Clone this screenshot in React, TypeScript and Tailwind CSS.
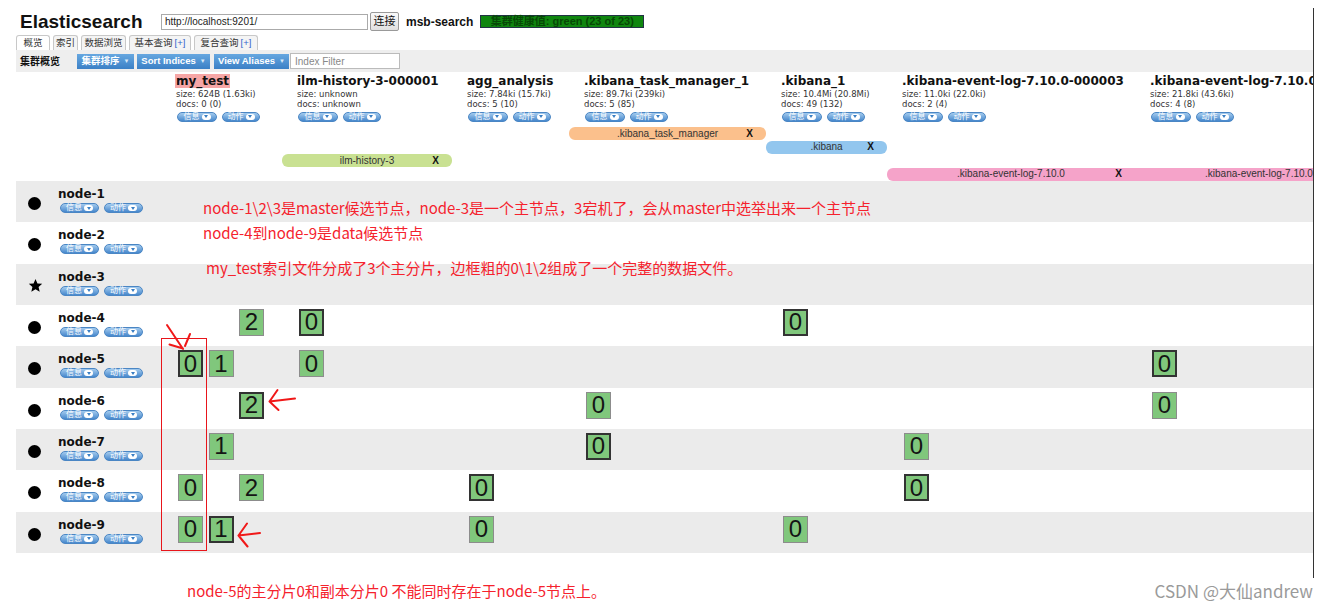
import clsx from "clsx";

type Slot = "p" | "r" | null;

const COLS =
  "grid grid-cols-[159px_121px_170px_117px_197px_121px_248px_164px]";

const indices = [
  { name: "my_test", size: "624B (1.63ki)", docs: "0 (0)", hl: true },
  { name: "ilm-history-3-000001", size: "unknown", docs: "unknown" },
  { name: "agg_analysis", size: "7.84ki (15.7ki)", docs: "5 (10)" },
  { name: ".kibana_task_manager_1", size: "89.7ki (239ki)", docs: "5 (85)" },
  { name: ".kibana_1", size: "10.4Mi (20.8Mi)", docs: "49 (132)" },
  {
    name: ".kibana-event-log-7.10.0-000003",
    size: "11.0ki (22.0ki)",
    docs: "2 (4)",
  },
  { name: ".kibana-event-log-7.10.0", size: "21.8ki (43.6ki)", docs: "4 (8)" },
];

const aliases = [
  {
    name: ".kibana_task_manager",
    col: "col-start-5",
    w: "w-[197px]",
    color: "bg-[#fbc08c]",
  },
  { name: ".kibana", col: "col-start-6", w: "w-[121px]", color: "bg-[#92c6ee]" },
  {
    name: "ilm-history-3",
    col: "col-start-3",
    w: "w-[170px]",
    color: "bg-[#c9e192]",
  },
];

const nodes: { name: string; star?: boolean; shards: Slot[][] }[] = [
  { name: "node-1", shards: [] },
  { name: "node-2", shards: [] },
  { name: "node-3", star: true, shards: [] },
  { name: "node-4", shards: [[null, null, "r"], ["p"], [], [], ["p"], [], []] },
  { name: "node-5", shards: [["p", "r"], ["r"], [], [], [], [], ["p"]] },
  { name: "node-6", shards: [[null, null, "p"], [], [], ["r"], [], [], ["r"]] },
  { name: "node-7", shards: [[null, "r"], [], [], ["p"], [], ["r"], []] },
  { name: "node-8", shards: [["r", null, "r"], [], ["p"], [], [], ["p"], []] },
  { name: "node-9", shards: [["r", "p"], [], ["r"], [], ["r"], [], []] },
];

const MenuButton = ({ label, w }: { label: string; w: string }) => (
  <span
    className={clsx(
      "flex h-[10px] items-center justify-center gap-[2px] rounded-full border border-[#4a86c4] bg-[linear-gradient(#a4cbee,#4687cc)] text-[8px] leading-none text-white",
      w
    )}
  >
    <span>{label}</span>
    <span className="flex h-[6px] w-[9px] items-center justify-center rounded-full bg-white">
      <span className="border-x-[2.5px] border-t-[3px] border-x-transparent border-t-[#3b7fc4]" />
    </span>
  </span>
);

const ToolButton = ({ label, w }: { label: string; w: string }) => (
  <span
    className={clsx(
      "flex h-[15px] items-center justify-center gap-[4px] bg-[linear-gradient(#66a7e0,#3b80c6)] text-[9.5px] font-bold leading-none text-white",
      w
    )}
  >
    {label}
    <span className="text-[6px] text-[#d8e8f8]">▼</span>
  </span>
);

const Shard = ({ n, primary }: { n: number; primary: boolean }) => (
  <div
    className={clsx(
      "flex h-[27px] w-[25px] shrink-0 items-center justify-center bg-[#80c77c] text-[24px] leading-none text-[#151515]",
      primary ? "border-2 border-[#333]" : "border border-[#8c8c8c]"
    )}
  >
    {n}
  </div>
);

const Star = () => (
  <svg width="15" height="15" viewBox="0 0 24 24" className="-mt-[2px]">
    <path
      d="M12 1.5l3.1 7.1 7.6.7-5.8 5 1.8 7.5L12 17.8l-6.7 4 1.8-7.5-5.8-5 7.6-.7z"
      fill="#000"
    />
  </svg>
);

export default function App() {
  return (
    <div className="relative h-[610px] w-[1327px] overflow-hidden bg-white font-['Liberation_Sans','Noto_Sans_CJK_SC',sans-serif] text-[#111]">
      <div className="ml-[16px] mt-[8px] h-[570px] w-[1298px] overflow-hidden border-r border-[#333]">
        {/* header */}
        <div className="flex h-[27px] items-center">
          <div className="w-[145px] pl-[4px] text-[19px] font-bold leading-none">
            Elasticsearch
          </div>
          <div className="flex h-[16px] w-[207px] items-center border border-[#aaa] bg-white pl-[3px] text-[10px] text-[#222]">
            http://localhost:9201/
          </div>
          <div className="ml-[2px] flex h-[19px] w-[29px] items-center justify-center rounded-[2px] border border-[#999] bg-[linear-gradient(#fafafa,#e0e0e0)] text-[11px]">
            连接
          </div>
          <div className="ml-[7px] text-[12px] font-bold">msb-search</div>
          <div className="ml-[7px] flex h-[13px] w-[164px] items-center justify-center border border-[#234] bg-[#0f860f] text-[11px] font-bold leading-none text-[#064806]">
            集群健康值: green (23 of 23)
          </div>
        </div>

        {/* tabs */}
        <div className="flex h-[15px] items-end gap-[3px]">
          {[
            { t: "概览", w: "w-[34px]", a: true },
            { t: "索引", w: "w-[25px]" },
            { t: "数据浏览", w: "w-[45px]" },
            { t: "基本查询", w: "w-[62px]", plus: true },
            { t: "复合查询", w: "w-[64px]", plus: true },
          ].map((tab) => (
            <div
              key={tab.t}
              className={clsx(
                "flex h-[15px] items-center justify-center gap-[2px] rounded-t-[3px] border border-b-0 border-[#c8c8c8] text-[9.5px] leading-none text-[#333]",
                tab.w,
                tab.a ? "bg-white" : "bg-[#f4f4f4]"
              )}
            >
              {tab.t}
              {tab.plus && <span className="text-[#3366cc]">[+]</span>}
            </div>
          ))}
        </div>

        {/* toolbar */}
        <div className="flex h-[22px] items-center bg-[#eeeeee] pl-[4px]">
          <span className="w-[57px] text-[10px] font-bold">集群概览</span>
          <ToolButton label="集群排序" w="w-[57px]" />
          <span className="ml-[3px]">
            <ToolButton label="Sort Indices" w="w-[73px]" />
          </span>
          <span className="ml-[4px]">
            <ToolButton label="View Aliases" w="w-[75px]" />
          </span>
          <div className="ml-[1px] flex h-[16px] w-[110px] items-center border border-[#bbb] bg-white pl-[4px] text-[10px] text-[#888]">
            Index Filter
          </div>
        </div>

        {/* index headers */}
        <div className={clsx(COLS, "h-[55px]")}>
          <div />
          {indices.map((ix) => (
            <div key={ix.name} className="whitespace-nowrap pt-[1.5px]">
              <div className="font-['DejaVu_Sans',sans-serif] text-[12px] font-bold leading-[15px]">
                <span className={clsx("px-[1px]", ix.hl && "bg-[#f6a6a6]")}>
                  {ix.name}
                </span>
              </div>
              <div className="pl-[1px] font-['DejaVu_Sans',sans-serif] text-[8.5px] leading-[10px] text-[#333]">
                size: {ix.size}
              </div>
              <div className="pl-[1px] font-['DejaVu_Sans',sans-serif] text-[8.5px] leading-[10px] text-[#333]">
                docs: {ix.docs}
              </div>
              <div className="mt-[3px] flex gap-[5px] pl-[2px]">
                <MenuButton label="信息" w="w-[40px]" />
                <MenuButton label="动作" w="w-[38px]" />
              </div>
            </div>
          ))}
        </div>

        {/* aliases */}
        {aliases.map((a) => (
          <div key={a.name} className={clsx(COLS, "h-[13.5px]")}>
            <div
              className={clsx(
                "relative -ml-[14px] flex h-[13px] items-center justify-center rounded-[6px] text-[10px] leading-none text-[#333]",
                a.col,
                a.w,
                a.color
              )}
            >
              {a.name}
              <span className="absolute right-[13px] font-bold text-[#111]">X</span>
            </div>
          </div>
        ))}
        <div className={clsx(COLS, "h-[13.5px]")}>
          <div className="col-span-2 col-start-7 -ml-[14px] flex h-[13px] w-[496px] rounded-[6px] bg-[#f5a3c9] text-[10px] leading-none text-[#333]">
            {[0, 1].map((k) => (
              <div
                key={k}
                className="relative flex w-[248px] shrink-0 items-center justify-center"
              >
                .kibana-event-log-7.10.0
                <span className="absolute right-[13px] font-bold text-[#111]">X</span>
              </div>
            ))}
          </div>
        </div>

        {/* nodes */}
        {nodes.map((n, i) => (
          <div
            key={n.name}
            className={clsx(COLS, "h-[41.33px]", i % 2 === 0 ? "bg-[#ebebeb]" : "bg-white")}
          >
            <div className="flex pl-[12px]">
              <div className="w-[30px] pt-[16px]">
                {n.star ? (
                  <Star />
                ) : (
                  <span className="block h-[13px] w-[13px] rounded-full bg-black" />
                )}
              </div>
              <div className="pt-[6px]">
                <div className="font-['DejaVu_Sans',sans-serif] text-[12px] font-bold leading-[14px]">
                  {n.name}
                </div>
                <div className="mt-[2px] flex gap-[5px] pl-[2px]">
                  <MenuButton label="信息" w="w-[39px]" />
                  <MenuButton label="动作" w="w-[39px]" />
                </div>
              </div>
            </div>
            {indices.map((ix, c) => (
              <div key={ix.name} className="flex gap-[5.5px] pl-[3px] pt-[4px]">
                {(n.shards[c] ?? []).map((s, k) =>
                  s ? (
                    <Shard key={k} n={c === 0 ? k : 0} primary={s === "p"} />
                  ) : (
                    <span key={k} className="w-[25px] shrink-0" />
                  )
                )}
              </div>
            ))}
          </div>
        ))}
      </div>

      {/* bottom line */}
      <div className="flex h-[24px] items-center justify-between pl-[187px] pr-[14px]">
        <span className="font-['Noto_Sans_CJK_SC',sans-serif] text-[15px] leading-none text-[#f5222d]">
          node-5的主分片0和副本分片0 不能同时存在于node-5节点上。
        </span>
        <span className="font-['Noto_Sans_CJK_SC',sans-serif] text-[17px] leading-none text-[#9a9a9a]">
          CSDN @大仙andrew
        </span>
      </div>

      {/* annotations */}
      <div className="pointer-events-none absolute left-[203px] top-[198px] whitespace-nowrap font-['Noto_Sans_CJK_SC',sans-serif] text-[15px] leading-[20px] text-[#f5222d]">
        {"node-1\\2\\3是master候选节点，node-3是一个主节点，3宕机了，会从master中选举出来一个主节点"}
      </div>
      <div className="pointer-events-none absolute left-[203px] top-[223px] whitespace-nowrap font-['Noto_Sans_CJK_SC',sans-serif] text-[15px] leading-[20px] text-[#f5222d]">
        node-4到node-9是data候选节点
      </div>
      <div className="pointer-events-none absolute left-[206px] top-[258px] whitespace-nowrap font-['Noto_Sans_CJK_SC',sans-serif] text-[15px] leading-[20px] text-[#f5222d]">
        {"my_test索引文件分成了3个主分片，边框粗的0\\1\\2组成了一个完整的数据文件。"}
      </div>
      <svg
        className="pointer-events-none absolute left-0 top-0"
        width="1327"
        height="610"
        viewBox="0 0 1327 610"
        fill="none"
        stroke="#f01818"
        strokeLinecap="round"
      >
        <rect x="161.5" y="338.5" width="45" height="212" strokeWidth="1" stroke="#e8151b" />
        <g strokeWidth="2">
          <path d="M167 325 L183 349 M169.5 344.5 L183 348.5 M190 334 L185 346" />
          <path d="M295 398.5 L269.5 401.5 M269.5 401.5 L277.5 390 M269.5 401.5 L278.5 410" />
          <path d="M260 533 L238.5 535.5 M238.5 535.5 L247 523.5 M238.5 535.5 L247.5 546.5" />
        </g>
      </svg>
    </div>
  );
}
